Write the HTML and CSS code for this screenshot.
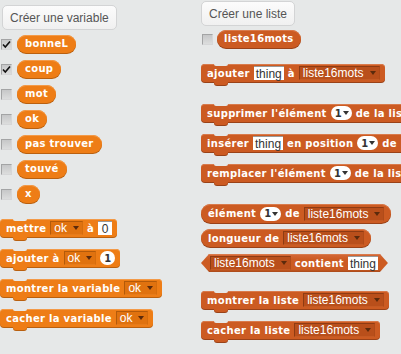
FILE: index.html
```html
<!DOCTYPE html>
<html lang="fr">
<head>
<meta charset="utf-8">
<link rel="stylesheet" href="styles.css">
</head>
<body>
<div class="palette">
  <div class="col col-left">
    <div class="btn">Créer une variable</div>
    <div class="vars">
      <div class="row"><span class="cb checked"><svg viewBox="0 0 11 11" width="11" height="11"><path d="M2 5.5 L4.3 8 L9 2.5" fill="none" stroke="#111" stroke-width="1.6"/></svg></span><span class="rep var">bonneL</span></div>
      <div class="row"><span class="cb checked"><svg viewBox="0 0 11 11" width="11" height="11"><path d="M2 5.5 L4.3 8 L9 2.5" fill="none" stroke="#111" stroke-width="1.6"/></svg></span><span class="rep var">coup</span></div>
      <div class="row"><span class="cb"></span><span class="rep var">mot</span></div>
      <div class="row"><span class="cb"></span><span class="rep var">ok</span></div>
      <div class="row"><span class="cb"></span><span class="rep var">pas trouver</span></div>
      <div class="row"><span class="cb"></span><span class="rep var">touvé</span></div>
      <div class="row"><span class="cb"></span><span class="rep var">x</span></div>
    </div>
    <div class="stack stack-vars">
      <div class="cmd var">mettre <span class="dd">ok</span> à <span class="box">0</span></div>
      <div class="cmd var">ajouter à <span class="dd">ok</span> <span class="round">1</span></div>
      <div class="cmd var">montrer la variable <span class="dd">ok</span></div>
      <div class="cmd var">cacher la variable <span class="dd">ok</span></div>
    </div>
  </div>
  <div class="col col-right">
    <div class="btn">Créer une liste</div>
    <div class="row list-row"><span class="cb"></span><span class="rep list">liste16mots</span></div>
    <div class="cmd list add">ajouter <span class="box">thing</span> à <span class="dd">liste16mots</span></div>
    <div class="cmd list del">supprimer l'élément <span class="round dd-round">1</span> de la liste16mots</div>
    <div class="cmd list ins">insérer <span class="box">thing</span> en position <span class="round dd-round">1</span> de liste16mots</div>
    <div class="cmd list rep-cmd">remplacer l'élément <span class="round dd-round">1</span> de la liste16mots</div>
    <div class="rblock list item">élément <span class="round dd-round">1</span> de <span class="dd">liste16mots</span></div>
    <div class="rblock list len">longueur de <span class="dd">liste16mots</span></div>
    <div class="bool list contains"><span class="dd">liste16mots</span> contient <span class="box">thing</span></div>
    <div class="cmd list show">montrer la liste <span class="dd">liste16mots</span></div>
    <div class="cmd list hide">cacher la liste <span class="dd">liste16mots</span></div>
  </div>
</div>
</body>
</html>
```

FILE: styles.css
```css
html, body {
  margin: 0;
  padding: 0;
}
body {
  width: 401px;
  height: 354px;
  overflow: hidden;
  background: #e6e8e8;
}
.palette {
  display: grid;
  grid-template-columns: 201px 200px;
  width: 401px;
  height: 354px;
  overflow: hidden;
}
.col {
  display: flex;
  flex-direction: column;
  align-items: flex-start;
  min-width: 0;
}
.col-left {
  padding-top: 5px;
}
.col-right {
  padding-top: 1px;
}
.btn {
  box-sizing: border-box;
  height: 25px;
  padding: 0 7px;
  display: flex;
  align-items: center;
  font: 12px "Liberation Sans", Arial, sans-serif;
  color: #555;
  background: linear-gradient(#fcfcfc, #f0f0f0);
  border: 1px solid #d3d4d5;
  border-radius: 5px;
  white-space: nowrap;
}
.col-left .btn {
  margin-left: 2px;
}
.vars {
  display: flex;
  flex-direction: column;
  gap: 6px;
  margin-top: 5px;
}
.row {
  display: flex;
  align-items: center;
  height: 19px;
  padding-left: 1px;
  gap: 5px;
}
.cb {
  box-sizing: border-box;
  width: 11px;
  height: 11px;
  border: 1px solid #a3a4a5;
  border-right-color: #d6d7d8;
  border-bottom-color: #d6d7d8;
  background: linear-gradient(#c6c7c8, #dcdddd);
  margin-top: -1px;
  display: flex;
  align-items: center;
  justify-content: center;
  flex-shrink: 0;
}
.cb svg {
  display: block;
  margin: -1px;
}
.rep, .cmd, .rblock, .bool {
  font: bold 10px "DejaVu Sans", sans-serif;
  letter-spacing: 0.3px;
  color: #fff;
  white-space: nowrap;
  flex-shrink: 0;
  box-sizing: border-box;
  width: max-content;
}
.rep {
  height: 18px;
  line-height: 18px;
  border-radius: 9px;
  padding: 0 8px 0 8px;
  margin-bottom: 1px;
}
.var {
  background: #ee7d16;
  box-shadow: 0 1px 0 #b9600f, inset 0 1px 0 #f39a48;
}
.list {
  background: #cc5b22;
  box-shadow: 0 1px 0 #9a4218, inset 0 1px 0 #d97a4b;
}
.list-row {
  margin-top: 4px;
  gap: 4px;
}
.list-row .rep {
  padding: 0 7px 0 7px;
}

/* command blocks */
.stack {
  display: flex;
  flex-direction: column;
  align-items: flex-start;
  gap: 12px;
}
.stack-vars {
  margin-top: 15px;
}
.cmd {
  position: relative;
  display: inline-flex;
  align-items: center;
  gap: 4px;
  height: 18px;
  padding: 0 5px 0 6px;
  border-radius: 4px;
}
.cmd::before {
  content: "";
  position: absolute;
  left: 13px;
  top: 0;
  width: 14px;
  height: 2px;
  background: #e6e8e8;
  border-radius: 0 0 4px 4px;
}
.cmd::after {
  content: "";
  position: absolute;
  left: 13px;
  top: 100%;
  width: 14px;
  height: 3px;
  border-radius: 0 0 4px 4px;
}
.cmd.var::after {
  background: #ee7d16;
  box-shadow: 0 1px 0 #b9600f;
}
.cmd.list::after {
  background: #cc5b22;
  box-shadow: 0 1px 0 #9a4218;
}
.add { margin-top: 15px; }
.del { margin-top: 22px; }
.ins { margin-top: 12px; }
.rep-cmd { margin-top: 12px; }
.show { margin-top: 19px; }
.hide { margin-top: 12px; }

/* reporter blocks */
.rblock {
  display: inline-flex;
  align-items: center;
  gap: 4px;
  height: 18px;
  border-radius: 9px;
  padding: 0 7px 0 7px;
  margin-bottom: 1px;
}
.item {
  margin-top: 22px;
  height: 19px;
  border-radius: 10px;
}
.len {
  margin-top: 5px;
}
.bool {
  display: inline-flex;
  align-items: center;
  gap: 4px;
  height: 18px;
  padding: 0 10px 0 9px;
  margin-top: 6px;
  clip-path: polygon(8px 0, calc(100% - 8px) 0, 100% 50%, calc(100% - 8px) 100%, 8px 100%, 0 50%);
  background: linear-gradient(#d4693a, #cc5b22 30%, #cc5b22 85%, #a84a1b);
}

/* inputs */
.dd, .box, .round {
  flex-shrink: 0;
  white-space: nowrap;
}
.dd {
  box-sizing: border-box;
  display: inline-flex;
  align-items: center;
  gap: 6px;
  height: 14px;
  padding: 0 3px 0 3px;
  font: 12px "Liberation Sans", Arial, sans-serif;
  letter-spacing: 0;
  color: #fff;
  border: 1px solid;
}
.var .dd {
  background: #e0720f;
  border-color: #b35a0a #d66d0d #e57b1a #b35a0a;
}
.list .dd {
  background: #b94f1b;
  border-color: #8e3b13 #b04b19 #c45a24 #8e3b13;
}
.dd::after {
  content: "";
  flex-shrink: 0;
  width: 0;
  height: 0;
  border-left: 3.5px solid transparent;
  border-right: 3.5px solid transparent;
  border-top: 4px solid #5b2a0c;
}
.box {
  box-sizing: border-box;
  display: inline-flex;
  align-items: center;
  justify-content: center;
  height: 14px;
  min-width: 14px;
  padding: 0 2px;
  background: #fff;
  font: 12px "Liberation Sans", Arial, sans-serif;
  letter-spacing: 0;
  color: #333;
  border-top: 1px solid #999;
}
.round {
  box-sizing: border-box;
  display: inline-flex;
  align-items: center;
  justify-content: center;
  height: 14px;
  min-width: 15px;
  padding: 0 3px;
  border-radius: 7px;
  background: #fff;
  font: bold 10px "DejaVu Sans", sans-serif;
  letter-spacing: 0;
  color: #333;
}
.dd-round {
  gap: 1px;
  padding: 0 3px 0 4px;
}
.dd-round::after {
  content: "";
  flex-shrink: 0;
  width: 0;
  height: 0;
  border-left: 3.5px solid transparent;
  border-right: 3.5px solid transparent;
  border-top: 4px solid #333;
}
```
